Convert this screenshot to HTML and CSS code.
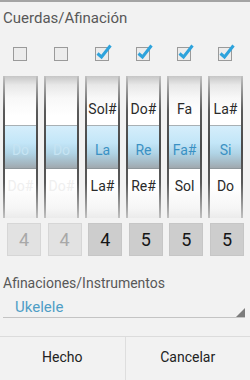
FILE: index.html
```html
<!DOCTYPE html>
<html>
<head>
<meta charset="utf-8">
<link rel="stylesheet" href="styles.css">
</head>
<body>
<div class="dialog">
  <div class="topline"></div>
  <div class="title">Cuerdas/Afinación</div>

  <div class="cols checks">
    <div class="cb"><svg width="17" height="17" viewBox="0 0 17 17"><rect x="0.5" y="3.5" width="13" height="13" class="box"/></svg></div>
    <div class="cb"><svg width="17" height="17" viewBox="0 0 17 17"><rect x="0.5" y="3.5" width="13" height="13" class="box"/></svg></div>
    <div class="cb"><svg width="17" height="17" viewBox="0 0 17 17"><rect x="0.5" y="3.5" width="13" height="13" class="box"/><path d="M2.5 9.5 L6.5 13 L15.5 1.5" class="tick"/></svg></div>
    <div class="cb"><svg width="17" height="17" viewBox="0 0 17 17"><rect x="0.5" y="3.5" width="13" height="13" class="box"/><path d="M2.5 9.5 L6.5 13 L15.5 1.5" class="tick"/></svg></div>
    <div class="cb"><svg width="17" height="17" viewBox="0 0 17 17"><rect x="0.5" y="3.5" width="13" height="13" class="box"/><path d="M2.5 9.5 L6.5 13 L15.5 1.5" class="tick"/></svg></div>
    <div class="cb"><svg width="17" height="17" viewBox="0 0 17 17"><rect x="0.5" y="3.5" width="13" height="13" class="box"/><path d="M2.5 9.5 L6.5 13 L15.5 1.5" class="tick"/></svg></div>
  </div>

  <div class="cols pickers">
    <div class="picker off">
      <div class="cell prev"></div>
      <div class="cell cur">Do</div>
      <div class="cell next">Do#</div>
    </div>
    <div class="picker off">
      <div class="cell prev"></div>
      <div class="cell cur">Do</div>
      <div class="cell next">Do#</div>
    </div>
    <div class="picker">
      <div class="cell prev">Sol#</div>
      <div class="cell cur">La</div>
      <div class="cell next">La#</div>
    </div>
    <div class="picker">
      <div class="cell prev">Do#</div>
      <div class="cell cur">Re</div>
      <div class="cell next">Re#</div>
    </div>
    <div class="picker">
      <div class="cell prev">Fa</div>
      <div class="cell cur">Fa#</div>
      <div class="cell next">Sol</div>
    </div>
    <div class="picker">
      <div class="cell prev">La#</div>
      <div class="cell cur">Si</div>
      <div class="cell next">Do</div>
    </div>
  </div>

  <div class="octaves">
    <div class="oct off">4</div>
    <div class="oct off">4</div>
    <div class="oct">4</div>
    <div class="oct">5</div>
    <div class="oct">5</div>
    <div class="oct">5</div>
  </div>

  <div class="label">Afinaciones/Instrumentos</div>
  <div class="spinner">
    <span class="spin-text">Ukelele</span>
    <span class="corner"></span>
  </div>

  <div class="buttons">
    <div class="btn">Hecho</div>
    <div class="btn">Cancelar</div>
  </div>
</div>
</body>
</html>
```

FILE: styles.css
```css
html, body {
  margin: 0;
  padding: 0;
}
body {
  background: #f2f2f2;
  font-family: Roboto, "Noto Sans", sans-serif;
  width: 250px;
  height: 380px;
  overflow: hidden;
}
.dialog {
  display: flex;
  flex-direction: column;
  height: 380px;
}
.topline {
  height: 2px;
  background: #a4a4a4;
}
.title {
  margin-top: 6px;
  padding-left: 3px;
  font-size: 15px;
  line-height: 20px;
  color: #585858;
}
.cols {
  display: grid;
  grid-template-columns: repeat(6, 35px);
  column-gap: 6px;
  padding-left: 3px;
}
.checks {
  height: 48px;
}
.cb {
  margin-top: 16px;
  margin-left: 10px;
  height: 17px;
}
.cb svg {
  display: block;
  overflow: visible;
}
.box {
  fill: #ececec;
  stroke: #9a9a9a;
  stroke-width: 1;
}
.tick {
  fill: none;
  stroke: #2ea3dc;
  stroke-width: 3;
  stroke-linecap: butt;
  stroke-linejoin: miter;
}
.pickers {
  height: 142px;
}
.picker {
  display: flex;
  flex-direction: column;
  height: 142px;
  box-sizing: border-box;
  border-style: solid;
  border-width: 0 2px;
  border-image: linear-gradient(to bottom, #c4c4c4, #5a5a5a 25%, #4a4a4a 50%, #5a5a5a 75%, #c4c4c4) 1;
  background: linear-gradient(to bottom, #c6c6c6 0, #e8e8e8 9px, #f8f8f8 22px, #ffffff 40px, #ffffff 110px, #f6f6f6 132px, #ebebeb 142px);
  font-size: 14px;
  color: #2a2a2a;
  text-align: center;
}
.cell {
  line-height: 16px;
  box-sizing: border-box;
}
.prev {
  height: 49px;
  padding-top: 25px;
}
.cur {
  height: 44px;
  padding-top: 16px;
  color: #3a91c4;
  border-top: 1px solid #a8b0b4;
  border-bottom: 1px solid #8e979c;
  background: linear-gradient(to bottom, #d5eefb 0%, #c3e6f8 40%, #b0d4e6 65%, #a4b6c0 90%, #a0a8ae 100%);
}
.next {
  height: 49px;
  padding-top: 9px;
}
.off .cur {
  color: #c6e4f3;
}
.off .next {
  color: #efefef;
}
.octaves {
  display: grid;
  grid-template-columns: repeat(6, 34px);
  column-gap: 6.6px;
  padding-left: 7px;
  margin-top: 5px;
}
.oct {
  height: 33px;
  box-sizing: border-box;
  background: #cdcdcd;
  border: 1px solid #c6c6c6;
  color: #151515;
  font-size: 18px;
  line-height: 31px;
  text-align: center;
}
.oct.off {
  background: #e2e2e2;
  border-color: #d6d6d6;
  color: #a8a8a8;
}
.label {
  margin-top: 17px;
  padding-left: 3px;
  font-size: 14px;
  line-height: 20px;
  color: #585858;
}
.spinner {
  display: flex;
  align-items: flex-end;
  justify-content: space-between;
  margin: 4px 5px 0 3px;
  padding-left: 12px;
  height: 21px;
  box-sizing: border-box;
  border-bottom: 1px solid #c4c4c4;
}
.spin-text {
  font-size: 15px;
  line-height: 20px;
  color: #4f9ec6;
}
.corner {
  width: 0;
  height: 0;
  border-style: solid;
  border-width: 0 0 9px 9px;
  border-color: transparent transparent #7c7c7c transparent;
}
.buttons {
  margin-top: auto;
  display: flex;
  height: 43px;
  border-top: 1px solid #dcdcdc;
}
.btn {
  flex: 1;
  text-align: center;
  font-size: 14px;
  line-height: 40px;
  color: #222222;
}
.btn + .btn {
  border-left: 1px solid #dedede;
}
```
